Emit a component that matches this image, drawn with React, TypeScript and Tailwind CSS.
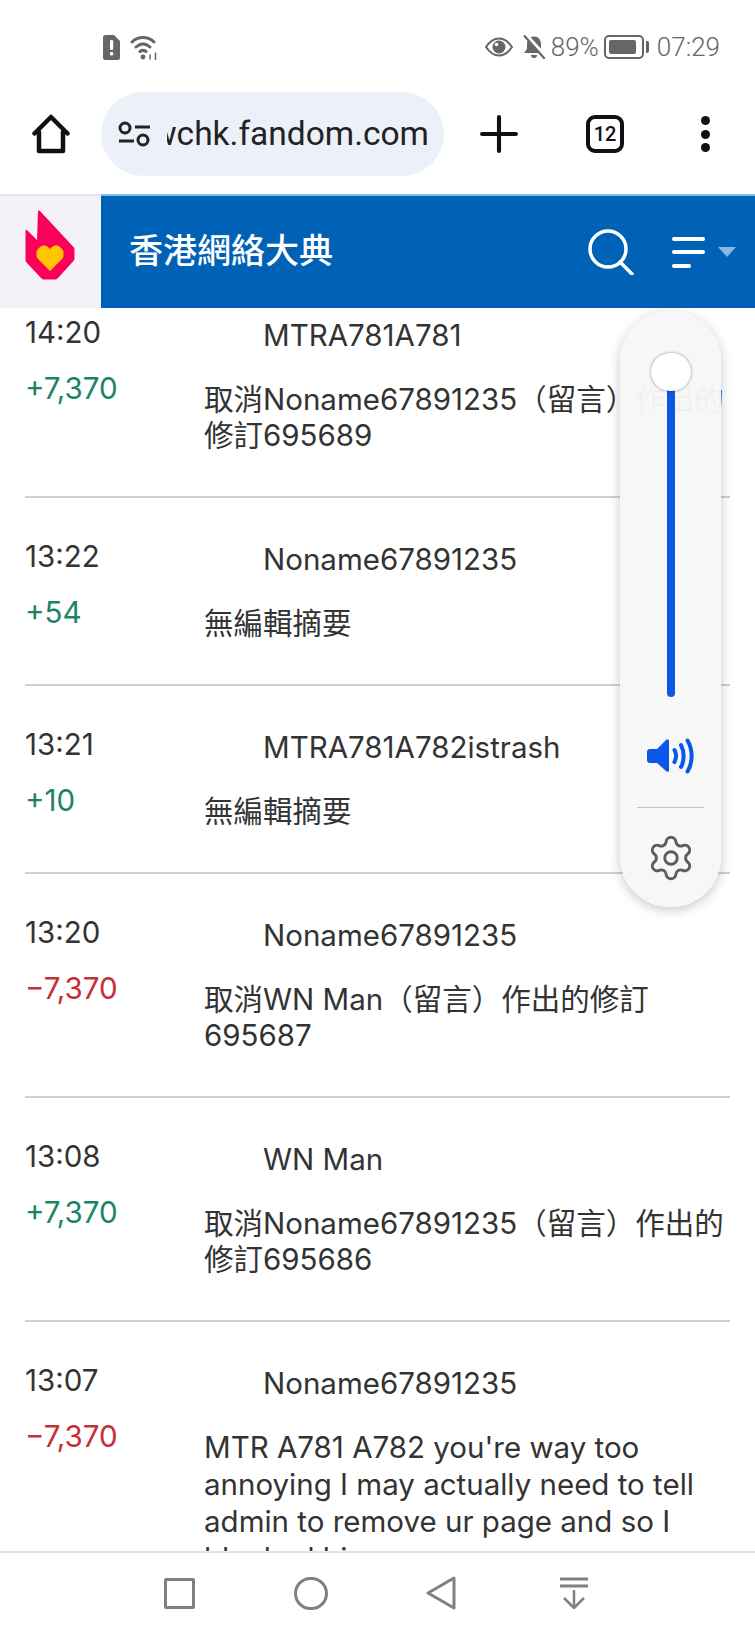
import { Plus, Settings } from "lucide-react"

const uiFont = "font-['Inter','Noto_Sans_CJK_TC',sans-serif]"

type Row = { time: string; delta: string; user: string; comment: string[] }

const rows: Row[] = [
  { time: "14:20", delta: "+7,370", user: "MTRA781A781", comment: ["取消Noname67891235（留言）作出的", "修訂695689"] },
  { time: "13:22", delta: "+54", user: "Noname67891235", comment: ["無編輯摘要"] },
  { time: "13:21", delta: "+10", user: "MTRA781A782istrash", comment: ["無編輯摘要"] },
  { time: "13:20", delta: "−7,370", user: "Noname67891235", comment: ["取消WN Man（留言）作出的修訂", "695687"] },
  { time: "13:08", delta: "+7,370", user: "WN Man", comment: ["取消Noname67891235（留言）作出的", "修訂695686"] },
  {
    time: "13:07",
    delta: "−7,370",
    user: "Noname67891235",
    comment: ["MTR A781 A782 you're way too", "annoying I may actually need to tell", "admin to remove ur page and so I", "blocked him"],
  },
]

function StatusBar() {
  return (
    <div className="h-[92px] flex items-center justify-between pl-[103px] pr-[35px] pt-[2px] text-[#666] font-['Roboto',sans-serif]">
      <div className="flex items-center gap-[10px]">
        <svg width="17" height="25" viewBox="0 0 17 25">
          <path d="M2.500 0H11l6 6v16.500a2.500 2.500 0 0 1-2.500 2.500h-12A2.500 2.500 0 0 1 0 22.500v-20A2.500 2.500 0 0 1 2.500 0z" fill="#666" />
          <rect x="7" y="5" width="3.200" height="10" rx="1.200" fill="#fff" />
          <rect x="7" y="17" width="3.200" height="3.400" rx="1.200" fill="#fff" />
        </svg>
        <svg width="28" height="25" viewBox="0 0 28 25" fill="none" stroke="#666" strokeWidth="3" strokeLinecap="round">
          <path d="M2 7C8 1 18 1 24 7" />
          <path d="M6 12c4.500-4 9.500-4 14 0" />
          <path d="M10 16.500c2-1.500 4-1.500 6 0" />
          <circle cx="13" cy="22" r="2.400" fill="#666" stroke="none" />
          <path d="M20 24v-4M25.500 25v-7" strokeWidth="1.500" />
        </svg>
      </div>
      <div className="flex items-center">
        <svg width="28" height="20" viewBox="0 0 28 20" className="mr-[10px]">
          <path d="M1 10C5 4 9 1.500 14 1.500S23 4 27 10c-4 6-8 8.500-13 8.500S5 16 1 10z" fill="none" stroke="#666" strokeWidth="2" />
          <circle cx="14" cy="10" r="6.500" fill="#666" />
          <circle cx="11.500" cy="7.500" r="1.800" fill="#fff" />
        </svg>
        <svg width="22" height="24" viewBox="0 0 22 24" className="mr-[6px]">
          <path d="M11 1.500c4.500 0 7 3.500 7 7.500v5l3 4H1l3-4V9c0-4 2.500-7.500 7-7.500z" fill="#666" />
          <path d="M8 20h6a3 3 0 0 1-6 0z" fill="#666" />
          <path d="M3 0.500 21.500 21" stroke="#fff" strokeWidth="4.500" />
          <path d="M1.500 1 21 23" stroke="#666" strokeWidth="2.200" strokeLinecap="round" />
        </svg>
        <span className="text-[26px] font-light leading-none mr-[5px]">89%</span>
        <div className="w-[40px] h-[24px] rounded-[5px] border-2 border-[#666] p-[3px] mr-[2px]">
          <div className="h-full w-[27px] rounded-[2px] bg-[#666]" />
        </div>
        <div className="w-[3px] h-[12px] rounded-r-[2px] bg-[#666] mr-[8px]" />
        <span className="text-[26px] font-light leading-none">07:29</span>
      </div>
    </div>
  )
}

function Toolbar() {
  return (
    <div className="h-[102px] flex items-start">
      <div className="w-[101px] h-[84px] flex items-center justify-center">
        <svg width="40" height="40" viewBox="0 0 40 40" fill="none" stroke="#111" strokeWidth="4.500" strokeLinejoin="round" strokeLinecap="round">
          <path d="M3.500 19.500 20 3l16.500 16.500" />
          <path d="M8 18v19h24V18" />
        </svg>
      </div>
      <div className="w-[343px] h-[84px] rounded-[42px] bg-[#ecf1f9] flex items-center pl-[17px] overflow-hidden">
        <svg width="32" height="26" viewBox="0 0 32 26" fill="none" stroke="#222" strokeWidth="3" className="shrink-0">
          <circle cx="7" cy="7" r="5" />
          <path d="M17 6h15M1 20h15" />
          <circle cx="25" cy="19" r="5" />
        </svg>
        <div className="w-[262px] ml-[17px] overflow-hidden flex justify-end">
          <span className="text-[33.500px] leading-none text-[#222] whitespace-nowrap font-['Roboto',sans-serif]">wchk.fandom.com</span>
        </div>
      </div>
      <div className="w-[311px] h-[84px] flex items-center">
        <Plus size={58} strokeWidth={1.7} className="ml-[26px] text-[#111] shrink-0" />
        <div className="ml-[58px] w-[38px] h-[38px] rounded-[9px] border-[4px] border-[#111] flex items-center justify-center text-[20px] font-medium text-[#111] font-['Roboto',sans-serif] shrink-0">
          12
        </div>
        <div className="ml-[77px] flex flex-col gap-[4.500px]">
          <div className="w-[9px] h-[9px] rounded-full bg-[#111]" />
          <div className="w-[9px] h-[9px] rounded-full bg-[#111]" />
          <div className="w-[9px] h-[9px] rounded-full bg-[#111]" />
        </div>
      </div>
    </div>
  )
}

function WikiHeader() {
  return (
    <div className="relative z-10 h-[114px] flex shrink-0">
      <div className="w-[101px] bg-[#f4f2f6] border-t-2 border-[#e6e4e8] flex items-center justify-center pr-[2px]">
        <svg width="52" height="72" viewBox="0 0 52 72" className="mb-[14px]">
          <path
            d="M14 2.500c0-1 1-1.500 2-.5l33 35.500c1 1 1.500 2 1.500 3.500v8c0 1.500-.5 2.500-1.500 3.500L34 69c-1 1-2 1.500-3 1.500H20c-1 0-2-.5-3-1.500L3 54c-1-1-1.500-2-1.500-3.500V22c0-1 1-1.500 2-.5L13 31z"
            fill="#fa005a"
          />
          <path d="M26 62 14 50c-1-1-1.500-2-1.500-3v-4c0-1 .5-2 1.500-3l2-2c1-1 2-1.500 3-1.500h2c1 0 2 .5 3 1.500l2 2 2-2c1-1 2-1.500 3-1.500h2c1 0 2 .5 3 1.500l2 2c1 1 1.500 2 1.500 3v4c0 1-.5 2-1.500 3z" fill="#ffc500" />
        </svg>
      </div>
      <div className="flex-1 bg-[#0062b6] border-t-2 border-[#7cc0e8] flex items-center pb-[2px]">
        <span className="ml-[28px] mb-[4px] text-[34px] font-medium leading-none text-white font-['Noto_Sans_CJK_TC',sans-serif]">香港網絡大典</span>
        <svg width="46" height="46" viewBox="0 0 46 46" fill="none" stroke="#fff" strokeWidth="3.500" strokeLinecap="round" className="ml-[255px] mt-[2px]">
          <circle cx="20" cy="20" r="18" />
          <path d="M32 33 44 45" />
        </svg>
        <div className="ml-[38px] mt-[2px] flex flex-col gap-[9.500px]">
          <div className="w-[33px] h-[4px] rounded-full bg-white" />
          <div className="w-[33px] h-[4px] rounded-full bg-white" />
          <div className="w-[19px] h-[4px] rounded-full bg-white" />
        </div>
        <div className="ml-[13px] mt-[2px] w-0 h-0 border-x-[9px] border-x-transparent border-t-[10px] border-t-[#8ab8e4]" />
      </div>
    </div>
  )
}

function ChangeRow({ row }: { row: Row }) {
  const deltaColor = row.delta.startsWith("+") ? "text-[#1a8465]" : "text-[#c72f34]"
  return (
    <div className="flex border-b-2 border-[#d0d0d0] text-[#333] text-[29.500px] leading-[36px]">
      <div className="w-[179px] shrink-0 pt-[40px]">
        <div>{row.time}</div>
        <div className={`mt-[20px] ${deltaColor}`}>{row.delta}</div>
      </div>
      <div className="flex-1 pt-[43px] pb-[43px] whitespace-nowrap">
        <div className="pl-[59px] mb-[28px]">{row.user}</div>
        <div className={row.comment.length > 2 ? "leading-[37px]" : ""}>
          {row.comment.map((line) => (
            <div key={line}>{line}</div>
          ))}
        </div>
      </div>
    </div>
  )
}

function VolumePanel() {
  return (
    <div className="absolute left-[620px] top-[311px] z-20 w-[101px] h-[596px] rounded-[50px] bg-[#f7f7f8]/97 shadow-[0_3px_12px_rgba(0,0,0,0.22)] flex flex-col items-center">
      <div className="relative mt-[62px] w-[8px] h-[324px] rounded-full bg-[#0b57e8]">
        <div className="absolute -top-[20px] left-[-16px] w-[40px] h-[38px] rounded-full bg-white shadow-[0_0_3px_rgba(0,0,0,0.45)]" />
      </div>
      <svg width="50" height="36" viewBox="0 0 50 36" fill="none" className="mt-[41px]">
        <path d="M1 14a3 3 0 0 1 3-3h7L20 2c2-1.500 3-.5 3 1v29c0 2-1 2.500-3 1l-9-8H4a3 3 0 0 1-3-3z" fill="#0b57e8" />
        <g stroke="#0b57e8" strokeWidth="4" strokeLinecap="round">
          <path d="M28.500 12c2 3.500 2 8 0 12" />
          <path d="M35 7c3.500 6.500 3.500 15.500 0 22" />
          <path d="M41.500 2.500c5.500 9 5.500 22 0 31" />
        </g>
      </svg>
      <div className="mt-[33px] w-[67px] h-[1px] bg-[#c4c4c4]" />
      <Settings size={50} strokeWidth={1.4} className="mt-[25px] text-[#5c5c5c]" />
    </div>
  )
}

function BottomNav() {
  return (
    <div className="relative z-10 h-[85px] bg-white border-t-2 border-[#e4e4e4] flex items-center pl-[164px] gap-[99px] pb-[3px]">
      <div className="w-[31px] h-[31px] rounded-[2px] border-[3px] border-[#808080]" />
      <div className="w-[34px] h-[33px] rounded-full border-[3px] border-[#808080]" />
      <svg width="30" height="34" viewBox="0 0 30 34" fill="none" stroke="#808080" strokeWidth="3" strokeLinejoin="round" className="-ml-[1px]">
        <path d="M28 2 2 17l26 15z" />
      </svg>
      <svg width="30" height="32" viewBox="0 0 30 32" fill="none" stroke="#808080" strokeWidth="2.500" className="ml-[4px]">
        <path d="M1 2h28M1 9h28" strokeWidth="3" />
        <path d="M15 13v18M5 21l10 10 10-10" />
      </svg>
    </div>
  )
}

export default function App() {
  return (
    <div className={`relative w-[755px] h-[1636px] bg-white overflow-hidden flex flex-col ${uiFont}`}>
      <StatusBar />
      <Toolbar />
      <WikiHeader />
      <div className="flex-1 min-h-0 overflow-hidden pl-[25px] pr-[25px]">
        <div className="-mt-[34px]">
          {rows.map((row) => (
            <ChangeRow key={row.time} row={row} />
          ))}
        </div>
      </div>
      <BottomNav />
      <VolumePanel />
    </div>
  )
}
